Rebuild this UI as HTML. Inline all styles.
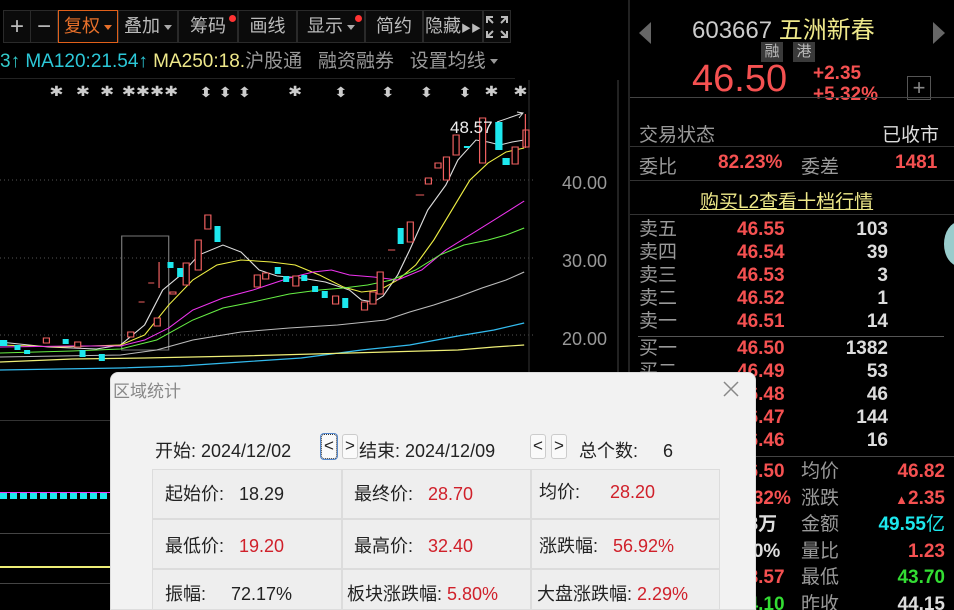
<!DOCTYPE html>
<html><head><meta charset="utf-8"><style>
*{margin:0;padding:0;box-sizing:border-box}
html,body{width:954px;height:610px;overflow:hidden}
body{background:#000;position:relative;font-family:"Liberation Sans","Noto Sans CJK SC",sans-serif;color:#ccc}
.abs{position:absolute}
.tb{position:absolute;top:10px;height:33px;border:1px solid #2a2a2a;background:#0b0b0b;color:#bbb;font-size:18px;line-height:31px;text-align:center;white-space:nowrap}
.dot{position:absolute;width:7px;height:7px;border-radius:50%;background:#f33;top:4px}
.tri{display:inline-block;width:0;height:0;border-left:4px solid transparent;border-right:4px solid transparent;border-top:5px solid #aaa;vertical-align:middle;margin-left:4px}
.red{color:#f55151}.wh{color:#ddd}.gr{color:#999}
.hl{position:absolute;height:1px;background:#333}
.cell{position:absolute;background:#eeeeee;border:1px solid #dcdcdc;font-size:18px;color:#222;line-height:20px;white-space:nowrap}
.cell .r{color:#d0202a}
.btn{position:absolute;top:61px;width:16px;height:25px;border:1px solid #ccc;border-radius:3px;background:#fafafa;font-size:17px;line-height:22px;text-align:center;color:#222}
</style></head><body>

<!-- toolbar -->
<div class="tb" style="left:3px;width:28px;font-size:24px">+</div>
<div class="tb" style="left:30px;width:28px;font-size:24px">−</div>
<div class="tb" style="left:58px;width:60px;border:1px solid #e0601a;color:#e8702a">复权<span class="tri" style="border-top-color:#e8702a"></span></div>
<div class="tb" style="left:118px;width:60px">叠加<span class="tri"></span></div>
<div class="tb" style="left:178px;width:60px">筹码<span class="dot" style="left:50px"></span></div>
<div class="tb" style="left:238px;width:59px">画线</div>
<div class="tb" style="left:297px;width:68px">显示<span class="tri"></span><span class="dot" style="left:57px"></span></div>
<div class="tb" style="left:365px;width:58px">简约</div>
<div class="tb" style="left:423px;width:60px">隐藏<span style="font-size:10px">▶▶</span></div>
<div class="tb" style="left:483px;width:28px">
<svg width="24" height="24" viewBox="0 0 24 24" style="margin-top:4px" fill="none" stroke="#bbb" stroke-width="2"><path d="M2 8V2h6M16 2h6v6M22 16v6h-6M8 22H2v-6M3 3l5 5M21 3l-5 5M21 21l-5-5M3 21l5-5"/></svg></div>

<!-- MA row -->
<div class="abs" style="top:50px;left:0;font-size:19px;white-space:nowrap;line-height:24px">
<span style="color:#3cc">3↑</span> <span style="color:#2cc8d8">MA120:21.54↑</span> <span style="color:#eee88a">MA250:18.</span><span style="color:#999">沪股通</span>&nbsp;&nbsp;&nbsp;<span style="color:#999">融资融券</span>&nbsp;&nbsp;&nbsp;<span style="color:#999">设置均线</span><span class="tri" style="border-top-color:#999"></span>
</div>
<div class="hl" style="left:0;top:78px;width:515px;background:#222"></div>

<!-- chart svg -->
<svg class="abs" style="left:0;top:80px" width="630" height="300" viewBox="0 80 630 300">
<g stroke="#555" stroke-dasharray="1,3"><line x1="0" y1="180" x2="535" y2="180"/><line x1="0" y1="258" x2="535" y2="258"/><line x1="0" y1="335" x2="535" y2="335"/></g>
<line x1="529" y1="45" x2="529" y2="372" stroke="#333"/>
<line x1="618" y1="0" x2="618" y2="372" stroke="#444"/>
<g fill="#999" font-size="18"><text x="562" y="189">40.00</text><text x="562" y="267">30.00</text><text x="562" y="345">20.00</text></g>
<g transform="scale(1.205,1)">
<g fill="#ccc" font-size="14">
<text x="41" y="96">✱</text><text x="63" y="96">✱</text><text x="83" y="96">✱</text><text x="101" y="96">✱✱✱✱</text>
<text x="239" y="96">✱</text><text x="402" y="96">✱</text><text x="426" y="96">✱</text>
<text x="165" y="97">⬍</text><text x="181" y="97">⬍</text><text x="197" y="97">⬍</text><text x="277" y="97">⬍</text><text x="316" y="97">⬍</text><text x="348" y="97">⬍</text><text x="380" y="97">⬍</text>
</g>
<rect x="101" y="236" width="39" height="114" fill="none" stroke="#777"/>
<polyline fill="none" stroke="#ddd" stroke-width="1" points="0,342 40,347 80,349 100,345 120,325 135,290 150,275 165,255 185,245 200,252 215,270 230,276 250,278 270,282 290,290 300,300 310,302 318,296 330,275 340,250 355,210 370,185 380,160 395,140 405,142 415,145 425,142 435,140"/>
<polyline fill="none" stroke="#ee4" stroke-width="1" points="0,345 50,347 100,345 120,335 140,305 160,280 180,265 200,260 225,262 245,265 265,275 285,287 300,292 315,290 330,280 345,265 360,240 375,210 390,180 405,163 420,152 435,148"/>
<polyline fill="none" stroke="#e3e" stroke-width="1" points="0,347 60,346 100,346 120,340 140,328 160,310 185,298 210,290 240,278 260,272 275,270 290,275 310,277 330,280 350,270 370,250 390,235 410,220 435,201"/>
<polyline fill="none" stroke="#6e4" stroke-width="1" points="0,353 60,351 100,349 130,340 160,320 185,308 210,302 240,294 265,290 285,288 305,285 325,280 345,270 365,255 385,245 405,240 420,235 435,228"/>
<polyline fill="none" stroke="#bbb" stroke-width="1" points="0,357 100,355 130,350 160,340 200,332 240,328 280,325 320,320 340,312 360,305 380,297 400,288 420,280 435,272"/>
<polyline fill="none" stroke="#3be" stroke-width="1.2" points="0,370 100,368 150,366 200,362 250,358 300,350 340,345 380,336 410,330 435,323"/>
<polyline fill="none" stroke="#ee7" stroke-width="1.2" points="0,362 60,359 120,358 200,356 260,354 320,352 380,350 410,347 435,345"/>
<g stroke="#f06060" fill="#000" stroke-width="1">
<rect x="36" y="338" width="5" height="5"/><rect x="62" y="342" width="5" height="5"/><rect x="106" y="332" width="5" height="5"/><rect x="128" y="318" width="5" height="8"/><rect x="141" y="292" width="5" height="2"/><line x1="115" y1="302" x2="120" y2="302"/><line x1="123" y1="283" x2="128" y2="283"/><line x1="132" y1="262" x2="132" y2="288"/>
<rect x="152" y="263" width="5" height="22"/><rect x="162" y="240" width="5" height="30"/><rect x="170" y="215" width="5" height="14"/><rect x="211" y="275" width="5" height="12"/><rect x="218" y="273" width="5" height="6"/><rect x="243" y="276" width="5" height="10"/><rect x="276" y="296" width="5" height="8"/><rect x="300" y="302" width="5" height="8"/><rect x="307" y="292" width="5" height="12"/><rect x="313" y="272" width="5" height="22"/><line x1="322" y1="250" x2="328" y2="250"/><rect x="338" y="222" width="5" height="20"/><line x1="345" y1="195" x2="352" y2="195"/><rect x="353" y="178" width="5" height="6"/><rect x="361" y="163" width="5" height="5"/><rect x="368" y="157" width="5" height="23"/><rect x="376" y="135" width="5" height="20"/><rect x="398" y="118" width="5" height="45"/><rect x="425" y="147" width="5" height="17"/><rect x="434" y="130" width="5" height="17"/><line x1="436" y1="114" x2="436" y2="148"/>
</g>
<g fill="#1de8ee">
<rect x="0" y="340" width="6" height="6"/><rect x="12" y="345" width="5" height="5"/><rect x="20" y="350" width="5" height="4"/><rect x="52" y="339" width="5" height="5"/><rect x="66" y="350" width="5" height="7"/><rect x="82" y="354" width="5" height="7"/><rect x="139" y="262" width="5" height="6"/><rect x="147" y="268" width="5" height="9"/><rect x="178" y="226" width="5" height="16"/><rect x="228" y="267" width="5" height="7"/><rect x="235" y="276" width="5" height="6"/><rect x="250" y="275" width="5" height="6"/><rect x="259" y="286" width="5" height="6"/><rect x="267" y="291" width="5" height="7"/><rect x="284" y="298" width="5" height="10"/><rect x="330" y="228" width="5" height="16"/><rect x="385" y="146" width="5" height="2"/><rect x="411" y="122" width="6" height="28"/><rect x="417" y="158" width="6" height="7"/>
</g>
</g>
<text x="450" y="133" fill="#eee" font-size="17">48.57</text>
<path d="M497 122 L523 113 M517 112 L523 113 L519 118" stroke="#ddd" fill="none"/>
</svg>
<div class="hl" style="left:0;top:420px;width:110px;background:#333"></div>
<div class="abs" style="left:0;top:493px;width:110px;height:6px;background:repeating-linear-gradient(90deg,#1de8ee 0 7px,#000 7px 10px)"></div>
<div class="abs" style="left:0;top:492px;width:110px;height:1px;background:#e3e"></div>
<div class="abs" style="left:0;top:566px;width:110px;height:2px;background:#ee7"></div>
<div class="hl" style="left:0;top:533px;width:110px;background:#444"></div>
<div class="hl" style="left:0;top:583px;width:110px;background:#444"></div>

<!-- right panel -->
<div class="abs" style="left:628px;top:0;width:2px;height:610px;background:#222"></div>
<div class="abs" style="left:639px;top:22px;width:0;height:0;border-top:11px solid transparent;border-bottom:11px solid transparent;border-right:12px solid #666"></div>
<div class="abs" style="left:933px;top:22px;width:0;height:0;border-top:11px solid transparent;border-bottom:11px solid transparent;border-left:12px solid #666"></div>
<div class="abs" style="left:692px;top:10px;font-size:24px;color:#ccc;white-space:nowrap">603667 <span style="color:#eee88a">五洲新春</span></div>
<div class="abs" style="left:761px;top:42px;width:22px;height:20px;background:#3a3a3a;color:#bbb;font-size:15px;text-align:center;line-height:20px">融</div>
<div class="abs" style="left:793px;top:42px;width:22px;height:20px;background:#3a3a3a;color:#bbb;font-size:15px;text-align:center;line-height:20px">港</div>
<div class="abs red" style="left:692px;top:58px;font-size:38px">46.50</div>
<div class="abs red" style="left:813px;top:63px;font-size:19px;line-height:21px;font-weight:bold">+2.35<br>+5.32%</div>
<div class="abs" style="left:907px;top:76px;width:24px;height:24px;border:1px solid #555;color:#888;text-align:center;line-height:21px;font-size:22px">+</div>
<div class="hl" style="left:630px;top:97px;width:324px;background:#444"></div>
<div class="abs gr" style="left:639px;top:120px;font-size:19px">交易状态</div>
<div class="abs wh" style="left:882px;top:120px;font-size:19px">已收市</div>
<div class="hl" style="left:630px;top:146px;width:324px"></div>
<div class="abs gr" style="left:639px;top:152px;font-size:19px">委比</div>
<div class="abs red" style="left:718px;top:152px;font-size:19px;font-weight:bold">82.23%</div>
<div class="abs gr" style="left:801px;top:152px;font-size:19px">委差</div>
<div class="abs red" style="left:895px;top:152px;font-size:19px;font-weight:bold">1481</div>
<div class="hl" style="left:630px;top:180px;width:324px"></div>
<div class="abs" style="left:700px;top:187px;font-size:19px;color:#eee88a;text-decoration:underline">购买L2查看十档行情</div>
<div class="hl" style="left:630px;top:214px;width:324px"></div>
<div class="abs" style="left:630px;top:218px;width:324px;font-size:19px;line-height:23px">
<div style="position:relative;height:23px"><span class="gr abs" style="left:9px">卖五</span><b class="red abs" style="left:107px">46.55</b><b class="wh abs" style="right:66px">103</b></div>
<div style="position:relative;height:23px"><span class="gr abs" style="left:9px">卖四</span><b class="red abs" style="left:107px">46.54</b><b class="wh abs" style="right:66px">39</b></div>
<div style="position:relative;height:23px"><span class="gr abs" style="left:9px">卖三</span><b class="red abs" style="left:107px">46.53</b><b class="wh abs" style="right:66px">3</b></div>
<div style="position:relative;height:23px"><span class="gr abs" style="left:9px">卖二</span><b class="red abs" style="left:107px">46.52</b><b class="wh abs" style="right:66px">1</b></div>
<div style="position:relative;height:23px"><span class="gr abs" style="left:9px">卖一</span><b class="red abs" style="left:107px">46.51</b><b class="wh abs" style="right:66px">14</b></div>
<div style="height:4px;border-bottom:1px solid #555;margin:0 10px 0 8px"></div>
<div style="position:relative;height:23px"><span class="gr abs" style="left:9px">买一</span><b class="red abs" style="left:107px">46.50</b><b class="wh abs" style="right:66px">1382</b></div>
<div style="position:relative;height:23px"><span class="gr abs" style="left:9px">买二</span><b class="red abs" style="left:107px">46.49</b><b class="wh abs" style="right:66px">53</b></div>
<div style="position:relative;height:23px"><b class="red abs" style="left:107px">46.48</b><b class="wh abs" style="right:66px">46</b></div>
<div style="position:relative;height:23px"><b class="red abs" style="left:107px">46.47</b><b class="wh abs" style="right:66px">144</b></div>
<div style="position:relative;height:23px"><b class="red abs" style="left:107px">46.46</b><b class="wh abs" style="right:66px">16</b></div>
</div>
<div class="hl" style="left:630px;top:456px;width:324px;background:#444"></div>
<div class="abs" style="left:630px;top:459px;width:324px;font-size:19px;line-height:26.6px">
<div style="position:relative;height:26.6px"><b class="red abs" style="left:107px">46.50</b><span class="gr abs" style="left:171px">均价</span><b class="red abs" style="right:9px">46.82</b></div>
<div style="position:relative;height:26.6px"><b class="red abs" style="left:107px">5.32%</b><span class="gr abs" style="left:171px">涨跌</span><b class="red abs" style="right:9px"><span style="font-size:13px">▲</span>2.35</b></div>
<div style="position:relative;height:26.6px"><b class="wh abs" style="left:107px">63万</b><span class="gr abs" style="left:171px">金额</span><b class="abs" style="right:9px;color:#1de8ee">49.55<span style="font-weight:normal">亿</span></b></div>
<div style="position:relative;height:26.6px"><b class="wh abs" style="left:107px">.00%</b><span class="gr abs" style="left:171px">量比</span><b class="red abs" style="right:9px">1.23</b></div>
<div style="position:relative;height:26.6px"><b class="red abs" style="left:107px">48.57</b><span class="gr abs" style="left:171px">最低</span><b class="abs" style="right:9px;color:#3d3">43.70</b></div>
<div style="position:relative;height:26.6px"><b class="abs" style="left:107px;color:#3d3">44.10</b><span class="gr abs" style="left:171px">昨收</span><b class="wh abs" style="right:9px">44.15</b></div>
</div>
<div class="abs" style="left:944px;top:222px;width:30px;height:44px;border-radius:50%;background:#9cc"></div>

<!-- dialog -->
<div class="abs" style="left:110px;top:372px;width:646px;height:238px;background:#f2f2f2;border-radius:8px 8px 0 0;border:1px solid #ddd;overflow:hidden">
<div class="abs" style="left:2px;top:4px;font-size:17px;color:#888">区域统计</div>
<svg class="abs" style="left:611px;top:7px" width="18" height="18"><path d="M2 2L16 16M16 2L2 16" stroke="#888" stroke-width="1.5"/></svg>
<div class="abs" style="left:44px;top:64px;font-size:18px;color:#222;white-space:nowrap">开始: 2024/12/02</div>
<div class="btn" style="left:210px;border:1px dotted #333;box-shadow:0 0 0 1px #58c">&lt;</div>
<div class="btn" style="left:231px">&gt;</div>
<div class="abs" style="left:248px;top:64px;font-size:18px;color:#222;white-space:nowrap">结束: 2024/12/09</div>
<div class="btn" style="left:419px">&lt;</div>
<div class="btn" style="left:440px">&gt;</div>
<div class="abs" style="left:468px;top:64px;font-size:18px;color:#222;white-space:nowrap">总个数:&nbsp;&nbsp;&nbsp;&nbsp;&nbsp;6</div>

<div class="cell" style="left:41px;top:96px;width:190px;height:50px;padding:14px 0 0 12px">起始价:&nbsp;&nbsp;&nbsp;18.29</div>
<div class="cell" style="left:231px;top:96px;width:189px;height:50px;padding:14px 0 0 11px">最终价:&nbsp;&nbsp;&nbsp;<span class="r">28.70</span></div>
<div class="cell" style="left:420px;top:96px;width:189px;height:50px;padding:12px 0 0 7px">均价:&nbsp;&nbsp;&nbsp;&nbsp;&nbsp;&nbsp;<span class="r">28.20</span></div>
<div class="cell" style="left:41px;top:146px;width:190px;height:50px;padding:16px 0 0 12px">最低价:&nbsp;&nbsp;&nbsp;<span class="r">19.20</span></div>
<div class="cell" style="left:231px;top:146px;width:189px;height:50px;padding:16px 0 0 11px">最高价:&nbsp;&nbsp;&nbsp;<span class="r">32.40</span></div>
<div class="cell" style="left:420px;top:146px;width:189px;height:50px;padding:16px 0 0 7px">涨跌幅:&nbsp;&nbsp;&nbsp;<span class="r">56.92%</span></div>
<div class="cell" style="left:41px;top:196px;width:190px;height:50px;padding:14px 0 0 12px">振幅:&nbsp;&nbsp;&nbsp;&nbsp;&nbsp;72.17%</div>
<div class="cell" style="left:231px;top:196px;width:189px;height:50px;padding:14px 0 0 4px">板块涨跌幅: <span class="r">5.80%</span></div>
<div class="cell" style="left:420px;top:196px;width:189px;height:50px;padding:14px 0 0 5px">大盘涨跌幅: <span class="r">2.29%</span></div>
</div>
</body></html>
